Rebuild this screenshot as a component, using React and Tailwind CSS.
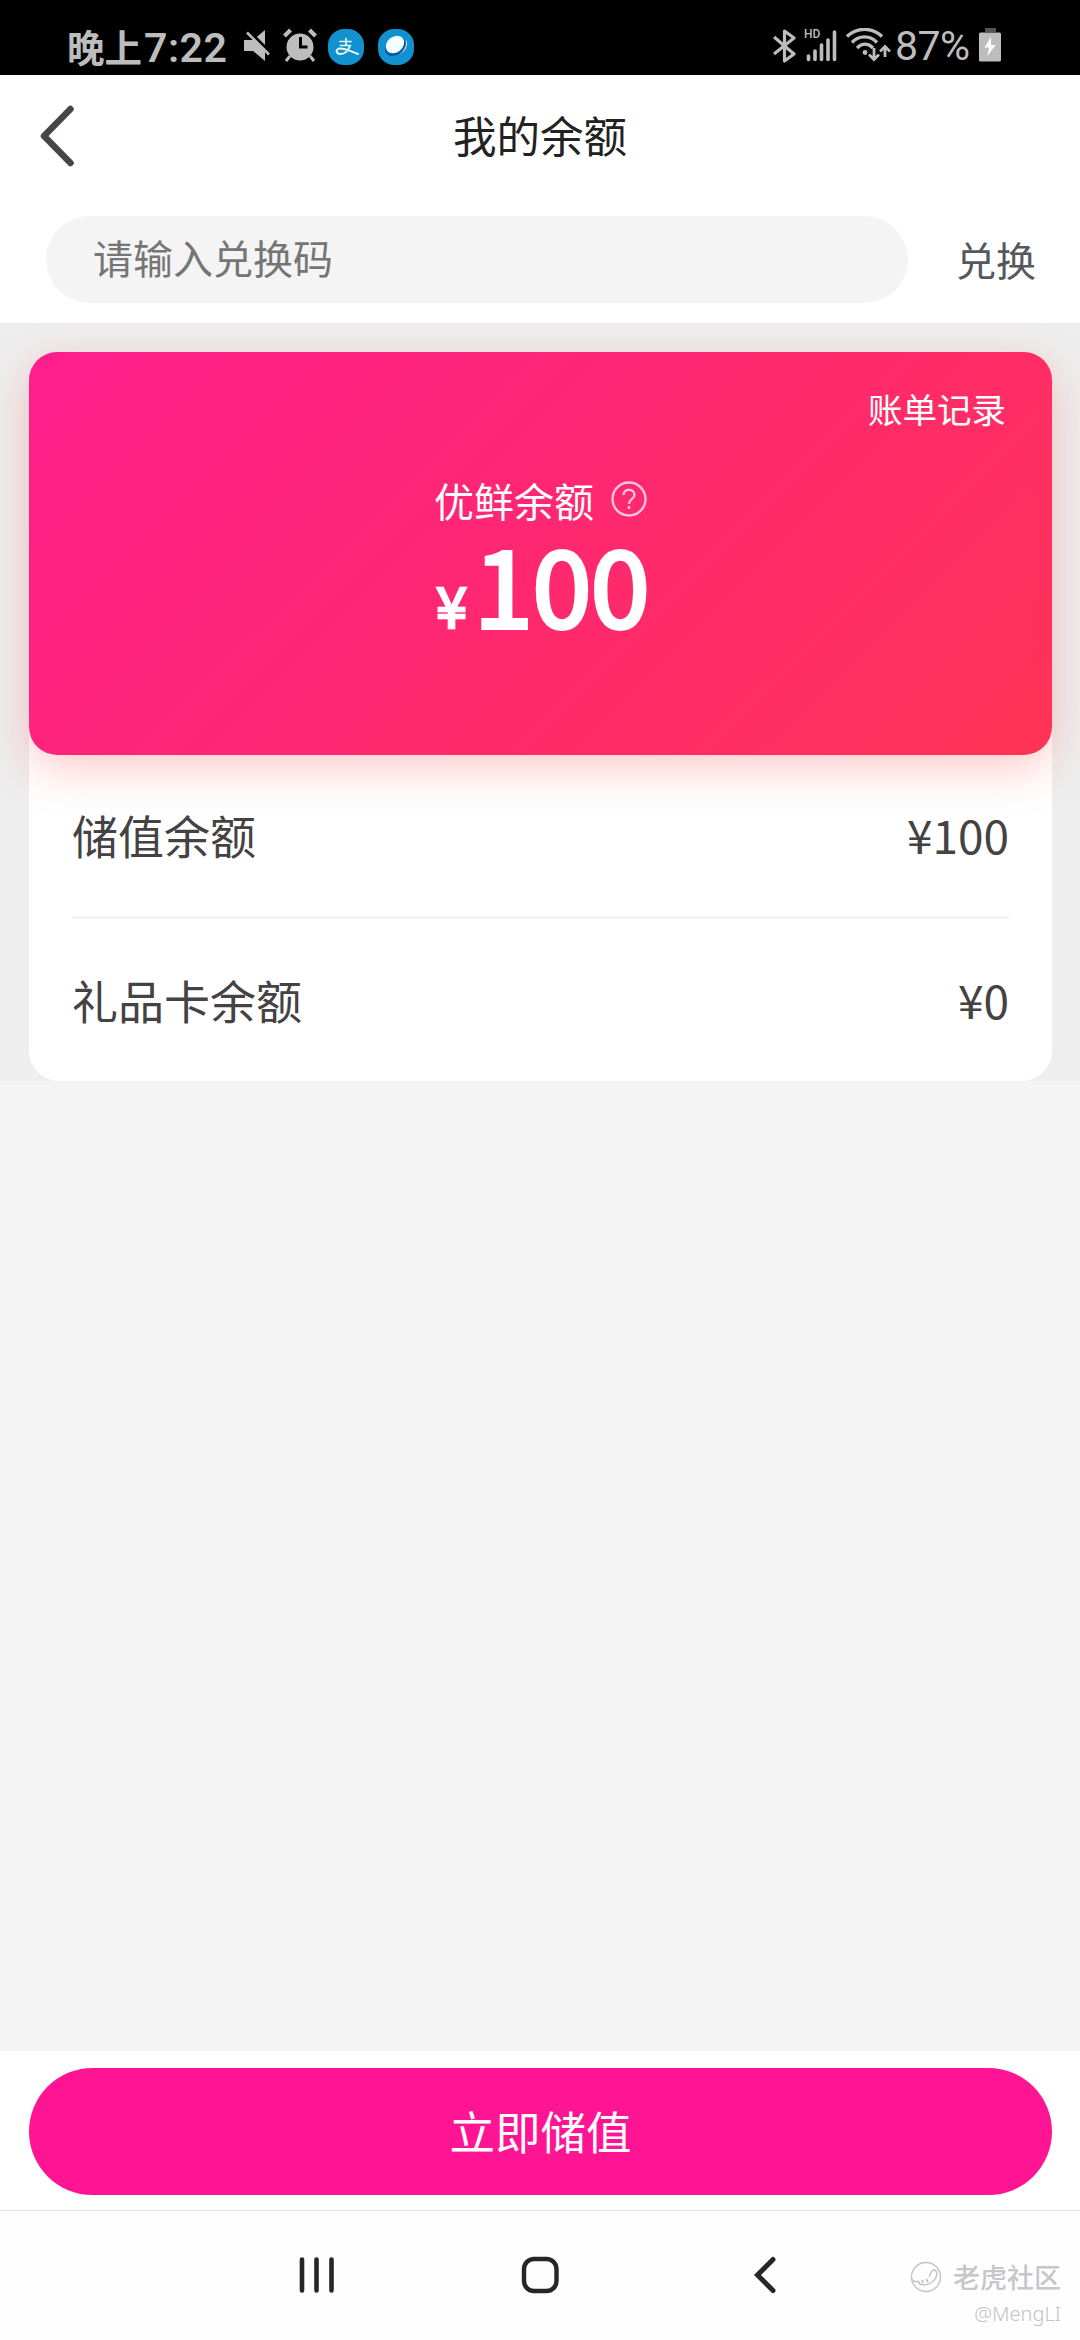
import React from "react";

const rows = [
  { label: "储值余额", value: "¥100" },
  { label: "礼品卡余额", value: "¥0" },
];

function StatusBar() {
  return (
    <div className="h-[75px] bg-black text-[#bdbdbd] flex items-start justify-between pl-[67px] pr-[79px] pt-[28px]">
      <div className="flex items-start">
        <div className="flex items-baseline h-[38px] w-[177px] whitespace-nowrap font-bold text-[37.500px] leading-[35px]">
          <span>晚上</span>
          <span className="font-['Roboto'] font-semibold text-[41px] ml-[2px] tracking-[0.500px]">7:22</span>
        </div>
        <svg className="w-[26px] h-[34px]" viewBox="0 0 26 34" fill="currentColor">
          <path d="M0 12h9L21 2v31L9 23H0z" />
          <path d="M4.500 2.500l22 22" stroke="#000" strokeWidth="3" />
          <path d="M3 4.500l22 22" stroke="currentColor" strokeWidth="2.600" />
        </svg>
        <svg className="w-[34px] h-[34px] ml-[13px]" viewBox="0 0 34 34" fill="none" stroke="currentColor">
          <circle cx="17" cy="19" r="13.500" fill="currentColor" stroke="none" />
          <path d="M1.500 8l6-6M32.500 8l-6-6" strokeWidth="4" />
          <path d="M7 28l-4 5M27 28l4 5" strokeWidth="3" />
          <path d="M17.500 9v10h7" stroke="#000" strokeWidth="3" />
        </svg>
        <svg className="w-[36px] h-[36px] ml-[11px] mt-[1px]" viewBox="0 0 36 36" fill="none">
          <rect width="36" height="36" rx="16" fill="#1192cf" />
          <g stroke="#e9fbff" strokeLinecap="round">
            <path d="M12 12.500h11M18 9.500v7M12.500 16.500h10" strokeWidth="1.600" />
            <path d="M22 17c-2 5-6 8-9.500 8-5 0-5-5.500-.5-5.500 6 0 11 3 18 5.500" strokeWidth="2" />
          </g>
        </svg>
        <svg className="w-[36px] h-[36px] ml-[14px] mt-[1px]" viewBox="0 0 36 36" fill="none">
          <rect width="36" height="36" rx="16" fill="#1192cf" />
          <path d="M28 11c4 9-6 17-16 15 8-1 14-7 16-15z" fill="#f3ffff" />
          <ellipse cx="17.500" cy="17.500" rx="11.500" ry="8.500" transform="rotate(-38 17.500 17.500)" fill="#0b55a8" />
          <ellipse cx="17" cy="15.500" rx="10" ry="7.800" transform="rotate(-38 17 15.500)" fill="#f3ffff" />
        </svg>
      </div>

      <div className="flex items-start">
        <svg className="w-[24px] h-[36px]" viewBox="0 0 24 36" fill="none" stroke="currentColor" strokeWidth="3.200">
          <path d="M1 9l20 17-9.500 7V3L21 10 1 26" strokeLinejoin="round" />
        </svg>
        <div className="ml-[7px] relative w-[34px] h-[34px]">
          <span className="absolute left-0 top-0 font-['Roboto'] font-medium text-[12px] leading-[12px]">HD</span>
          <svg className="w-[34px] h-[34px]" viewBox="0 0 34 34" stroke="currentColor" strokeWidth="3.600" strokeLinecap="round">
            <path d="M4.500 28v3.500M11 23v8.500M17.500 17v14.500M24 12v19.500M30.500 4v27.500" />
          </svg>
        </div>
        <svg className="w-[46px] h-[34px] ml-[8px]" viewBox="0 0 46 34" fill="none" stroke="currentColor" strokeWidth="3.400">
          <path d="M1 8.500C11-1 26-1 36 8.500M6 14.500c7-7.500 18-7.500 25 0M11 20c5-5 11-5 16 0" />
          <circle cx="19" cy="24.500" r="2.400" fill="currentColor" stroke="none" />
          <path d="M28 20v11M23 26.500l5 5 5-5M39 29V19M34 23.500l5-5 5 5" strokeWidth="2.800" />
        </svg>
        <span className="w-[81px] ml-[3px] font-['Roboto'] text-[41px] leading-[37px] tracking-[-0.500px]">87%</span>
        <svg className="w-[22px] h-[34px] ml-[3px]" viewBox="0 0 22 34">
          <path d="M6 0h11v4H6z" fill="#555" />
          <rect y="4.500" width="22" height="29" rx="1.500" fill="currentColor" />
          <path d="M12 9L5.500 19.500H10L8.500 28 16.500 17H12z" fill="#fff" />
        </svg>
      </div>
    </div>
  );
}

function Header() {
  return (
    <div className="bg-white h-[248px]">
      <div className="h-[141px] flex items-start pt-[28px] pl-[38px]">
        <svg className="w-[40px] h-[66px]" viewBox="0 0 40 66" fill="none">
          <path d="M32.500 6L6 33l26.500 27" stroke="#474546" strokeWidth="6.500" strokeLinecap="round" strokeLinejoin="round" />
        </svg>
        <h1 className="flex-1 pr-[78px] text-center text-[43.500px] leading-[64px] text-[#222]">我的余额</h1>
      </div>
      <div className="flex items-center pl-[46px] pr-[44px] justify-between">
        <input
          type="text"
          className="w-[862px] h-[87px] rounded-full bg-[#f4f4f4] px-[47px] pb-[5px] text-[40px] placeholder:text-[#757575] placeholder:opacity-100"
          placeholder="请输入兑换码"
        />
        <span className="text-[40px] leading-[60px] pb-[2px] text-[#55585d]">兑换</span>
      </div>
    </div>
  );
}

function BalanceCard() {
  return (
    <div className="bg-[#eee] h-[758px] px-[29px] pt-[29px] pr-[28px] overflow-hidden">
      <div className="bg-white rounded-[30px] h-[729px]">
        <div className="h-[403px] rounded-[28px] text-white bg-[linear-gradient(135deg,#ff1d8c_0%,#ff3355_100%)] shadow-[0_14px_46px_rgba(255,50,50,0.260)]">
          <div className="text-right pr-[46px] pt-[31px] text-[34.500px] leading-[50px]">账单记录</div>
          <div className="flex justify-center items-center mt-[37px] h-[60px]">
            <span className="text-[40px] leading-[60px]">优鲜余额</span>
            <svg className="w-[36px] h-[36px] ml-[17px] mb-[2px]" viewBox="0 0 36 36" fill="none" stroke="#ffc4dc" strokeWidth="2.400">
              <circle cx="18" cy="18" r="16.500" />
              <path d="M12.500 14c0-7 11-7 11 0 0 4-5.500 4-5.500 9" />
              <path d="M18 25v3" />
            </svg>
          </div>
          <div className="flex justify-center items-baseline pl-[4px] -mt-[3px]">
            <span className="text-[56px] leading-[110px] [-webkit-text-stroke:2.500px_#fff]">¥</span>
            <span className="ml-[7px] text-[106px] leading-[110px] tracking-[-0.500px] [-webkit-text-stroke:4px_#fff]">100</span>
          </div>
        </div>
        <div className="px-[43px] text-[46px] text-[#444243]">
          {rows.map((row) => (
            <div
              key={row.label}
              className="flex justify-between items-center h-[164px] pb-[2px] border-b-[3px] border-[#f4f4f4] last:h-[162px] last:border-b-0"
            >
              <span>{row.label}</span>
              <span>{row.value}</span>
            </div>
          ))}
        </div>
      </div>
    </div>
  );
}

function NavBar() {
  return (
    <div className="h-[130px] bg-[#fefefe] border-t border-[#dfdfdf] flex items-start pt-[44px] pl-[298px] text-[#262626]">
      <svg className="w-[38px] h-[40px]" viewBox="0 0 38 40" stroke="currentColor" strokeWidth="4.600" strokeLinecap="round">
        <path d="M4 4.500v31M18.500 4.500v31M33.500 4.500v31" />
      </svg>
      <svg className="w-[40px] h-[40px] ml-[184px]" viewBox="0 0 40 40" fill="none" stroke="currentColor" strokeWidth="4.400">
        <rect x="4" y="4" width="32.500" height="32" rx="10" />
      </svg>
      <svg className="w-[26px] h-[40px] ml-[191px]" viewBox="0 0 26 40" fill="none" stroke="currentColor" strokeWidth="5" strokeLinecap="round">
        <path d="M22 4.500L6.500 20 22 35.500" />
      </svg>
      <div className="ml-[129px] mt-[5px] flex flex-col items-end w-[155px]">
        <div className="flex items-center">
          <svg className="w-[32px] h-[32px] mr-[11px]" viewBox="0 0 32 32" fill="none" stroke="#c4c4c8" strokeWidth="1.400">
            <circle cx="16" cy="16" r="14.500" />
            <path d="M2 18c1 3 4 3 6 2M19 16c2-3 2-7 5-7 4 0 3 6 1 9-3 5-10 7-16 5" />
            <path d="M8 20l2 3M12 19l1 3M16 18l2 3" strokeWidth="2" />
          </svg>
          <span className="text-[27px] leading-[34px] font-medium text-[#c6c6cb] whitespace-nowrap">
            老虎社区
          </span>
        </div>
        <span className="mt-[3px] text-[20px] leading-[34px] text-[#c2c2c2] font-['Noto_Sans'] font-light">
          @MengLI
        </span>
      </div>
    </div>
  );
}

export default function App() {
  return (
    <div className="w-[1080px] h-[2340px] flex flex-col overflow-hidden bg-[#f4f4f4] font-['Noto_Sans_CJK_SC',sans-serif]">
      <StatusBar />
      <Header />
      <BalanceCard />
      <div className="flex-1" />
      <div className="bg-white h-[159px] pt-[17px] pl-[29px] pr-[28px]">
        <button className="w-full h-[127px] pb-[2px] rounded-full bg-[#ff1493] text-white text-[45.500px]">
          立即储值
        </button>
      </div>
      <NavBar />
    </div>
  );
}
